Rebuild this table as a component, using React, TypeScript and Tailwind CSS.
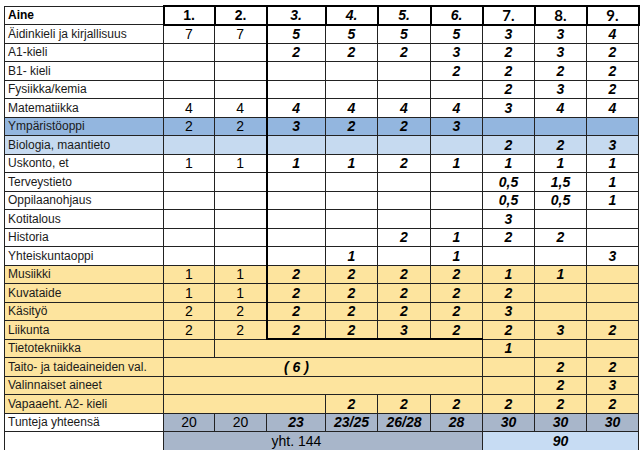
import React from "react";

type Cell = { t?: string; col: number; span?: number; bg?: string; cls?: string };
type Row = { label: string; bg: string; labelBg?: string; cells: Cell[] };

const WHITE = "bg-white";
const BLUE = "bg-[#93b6df]";
const LBLUE = "bg-[#c6daf0]";
const YELLOW = "bg-[#fde49e]";
const GRAY = "bg-[#a8b6ca]";
const SKY = "bg-[#c7dcf3]";

const nine = (vals: string[]): Cell[] => vals.map((t, i) => ({ t, col: i + 1 }));

const rows: Row[] = [
  { label: "Äidinkieli ja kirjallisuus", bg: WHITE, cells: nine(["7", "7", "5", "5", "5", "5", "3", "3", "4"]) },
  { label: "A1-kieli", bg: WHITE, cells: nine(["", "", "2", "2", "2", "3", "2", "3", "2"]) },
  { label: "B1- kieli", bg: WHITE, cells: nine(["", "", "", "", "", "2", "2", "2", "2"]) },
  { label: "Fysiikka/kemia", bg: WHITE, cells: nine(["", "", "", "", "", "", "2", "3", "2"]) },
  { label: "Matematiikka", bg: WHITE, cells: nine(["4", "4", "4", "4", "4", "4", "3", "4", "4"]) },
  { label: "Ympäristöoppi", bg: BLUE, cells: nine(["2", "2", "3", "2", "2", "3", "", "", ""]) },
  { label: "Biologia, maantieto", bg: LBLUE, cells: nine(["", "", "", "", "", "", "2", "2", "3"]) },
  { label: "Uskonto, et", bg: WHITE, cells: nine(["1", "1", "1", "1", "2", "1", "1", "1", "1"]) },
  { label: "Terveystieto", bg: WHITE, cells: nine(["", "", "", "", "", "", "0,5", "1,5", "1"]) },
  { label: "Oppilaanohjaus", bg: WHITE, cells: nine(["", "", "", "", "", "", "0,5", "0,5", "1"]) },
  { label: "Kotitalous", bg: WHITE, cells: nine(["", "", "", "", "", "", "3", "", ""]) },
  { label: "Historia", bg: WHITE, cells: nine(["", "", "", "", "2", "1", "2", "2", ""]) },
  { label: "Yhteiskuntaoppi", bg: WHITE, cells: nine(["", "", "", "1", "", "1", "", "", "3"]) },
  { label: "Musiikki", bg: YELLOW, cells: nine(["1", "1", "2", "2", "2", "2", "1", "1", ""]) },
  { label: "Kuvataide", bg: YELLOW, cells: nine(["1", "1", "2", "2", "2", "2", "2", "", ""]) },
  { label: "Käsityö", bg: YELLOW, cells: nine(["2", "2", "2", "2", "2", "2", "3", "", ""]) },
  { label: "Liikunta", bg: YELLOW, cells: nine(["2", "2", "2", "2", "3", "2", "2", "3", "2"]) },
  {
    label: "Tietotekniikka",
    bg: YELLOW,
    cells: [{ col: 1 }, { col: 2, span: 5 }, { t: "1", col: 7 }, { col: 8 }, { col: 9 }],
  },
  {
    label: "Taito- ja taideaineiden val.",
    bg: YELLOW,
    cells: [{ t: "( 6 )", col: 1, span: 6, cls: "pr-[53px]" }, { col: 7 }, { t: "2", col: 8 }, { t: "2", col: 9 }],
  },
  {
    label: "Valinnaiset aineet",
    bg: YELLOW,
    cells: [{ col: 1, span: 6 }, { col: 7 }, { t: "2", col: 8 }, { t: "3", col: 9 }],
  },
  {
    label: "Vapaaeht. A2- kieli",
    bg: YELLOW,
    cells: [
      { col: 1, span: 3 },
      { t: "2", col: 4 },
      { t: "2", col: 5 },
      { t: "2", col: 6 },
      { t: "2", col: 7 },
      { t: "2", col: 8 },
      { t: "2", col: 9 },
    ],
  },
  {
    label: "Tunteja yhteensä",
    bg: GRAY,
    labelBg: WHITE,
    cells: nine(["20", "20", "23", "23/25", "26/28", "28", "30", "30", "30"]),
  },
  {
    label: "",
    bg: GRAY,
    labelBg: WHITE,
    cells: [
      { t: "yht. 144", col: 1, span: 6, cls: "pr-[53px] !font-normal !not-italic" },
      { t: "90", col: 7, span: 3, bg: SKY },
    ],
  },
];

const widths = [159, 51, 52, 59, 52, 53, 52, 52, 52, 52];

export default function App() {
  return (
    <div className="w-[642px] h-[450px] bg-white pl-[4px] pt-[5px] font-['Liberation_Sans',Arial,sans-serif] text-black">
      <table className="border-collapse table-fixed w-[634px]">
        <colgroup>
          {widths.map((w, i) => (
            <col key={i} style={{ width: w }} />
          ))}
        </colgroup>
        <tbody>
          <tr className="h-[18.5px]">
            <td className="border border-[#222] px-[3px] py-0 text-[12px] font-bold leading-none text-left">Aine</td>
            {["1.", "2.", "3.", "4.", "5.", "6.", "7.", "8.", "9."].map((h, i) => (
              <td
                key={h}
                className={`border-2 border-black p-0 text-center leading-none ${
                  i < 2
                    ? "text-[14px] font-bold"
                    : i < 6
                    ? "text-[14px] font-bold italic"
                    : "text-[15px] font-bold font-['Lato',sans-serif]"
                }`}
              >
                {h}
              </td>
            ))}
          </tr>
          {rows.map((r, ri) => (
            <tr key={ri} className="h-[18.5px]">
              <td
                className={`border border-[#222] px-[3px] py-0 text-[12px] leading-none text-left text-[#1a1a1a] whitespace-nowrap ${
                  r.labelBg ?? r.bg
                }`}
              >
                {r.label}
              </td>
              {r.cells.map((c) => {
                const inBlock = ri < 17;
                const thickL = inBlock && c.col === 3 ? "border-l-2 border-l-black" : "";
                const thickB = ri === 16 && c.col >= 3 && c.col <= 6 ? "border-b-2 border-b-black" : "";
                const weight = c.col <= 2 && (c.span ?? 1) === 1 ? "font-normal" : "font-bold italic";
                return (
                  <td
                    key={c.col}
                    colSpan={c.span ?? 1}
                    className={`border border-[#222] p-0 text-center text-[14px] leading-none ${weight} ${
                      c.bg ?? r.bg
                    } ${thickL} ${thickB} ${c.cls ?? ""}`}
                  >
                    {c.t}
                  </td>
                );
              })}
            </tr>
          ))}
        </tbody>
      </table>
    </div>
  );
}
